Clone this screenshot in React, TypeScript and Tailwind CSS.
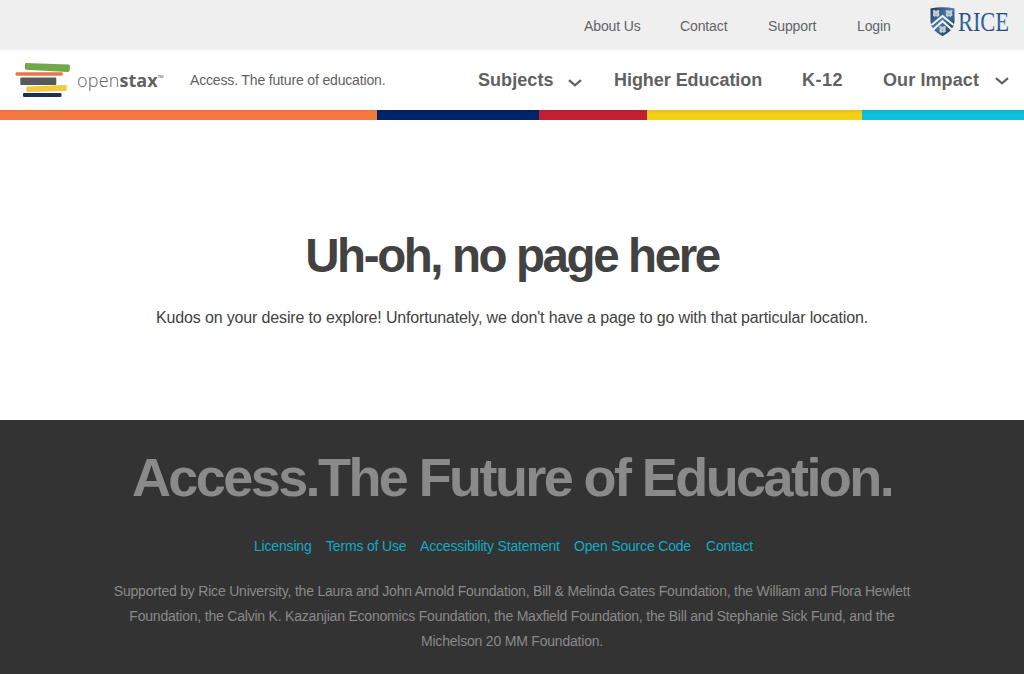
import React from "react";

function Chevron({ className }: { className: string }) {
  return (
    <svg viewBox="0 0 14 8" className={className} fill="none" stroke="currentColor" strokeWidth="2.3">
      <path d="M1 1.200 L7 6.300 L13 1.200" />
    </svg>
  );
}

function BooksLogo() {
  return (
    <svg viewBox="0 0 56 36" className="h-[36px] w-[56px] shrink-0">
      <path d="M11 1 L53.5 2.6 Q55 2.7 55 4 L54.6 8.6 Q54.5 10 53 9.9 L11 7.8 Q9.900 7.700 10 6.500 L10 2 Q10 1 11 1Z" fill="#72a84a" />
      <rect x="0.600" y="10.300" width="47" height="3.500" rx="1" fill="#ed7446" />
      <rect x="5.300" y="15.400" width="36" height="7.600" rx="1" fill="#585a58" />
      <path d="M12.500 24.600 L50.500 23.100 Q51.700 23.100 51.700 24.200 L51.900 27.600 Q51.900 28.900 50.700 29 L12.500 29.900 Q11.400 29.900 11.400 28.800 L11.300 25.700 Q11.300 24.600 12.500 24.600Z" fill="#f1cb40" />
      <rect x="8" y="30.900" width="38.500" height="4.100" rx="1" fill="#202d55" />
    </svg>
  );
}

function Owl({ x, y }: { x: number; y: number }) {
  return (
    <g transform={`translate(${x} ${y})`} fill="#c4cdd6">
      <path d="M0 .5 L2 0 L3.500 1 L5 0 L7 .5 L6.500 3 L7 5.500 L4.800 7 L3.500 6 L2 7 L.3 5.500 L.8 3Z" />
      <path d="M3 3.500h1v1.200h-1z" fill="#6f8299" />
    </g>
  );
}

function RiceLogo() {
  return (
    <svg viewBox="0 0 82 32" className="h-[32px] w-[82px] shrink-0 overflow-visible">
      <defs>
        <linearGradient id="shield" x1="0" y1="0" x2="1" y2="1">
          <stop offset="0" stopColor="#1c3554" />
          <stop offset="0.450" stopColor="#4a7cac" />
          <stop offset="1" stopColor="#162b49" />
        </linearGradient>
        <linearGradient id="rice" x1="0" y1="0" x2="0" y2="1">
          <stop offset="0" stopColor="#173766" />
          <stop offset="0.550" stopColor="#3c6ca8" />
          <stop offset="1" stopColor="#173766" />
        </linearGradient>
      </defs>
      <path d="M.5 1.500 Q12.500 -1 24.500 1.500 V15 Q24 23 12.500 29.300 Q1 23 .5 15Z" fill="url(#shield)" />
      <path d="M1.500 18 L12.500 9 L23.500 18 M3 22.700 L12.500 14.200 L22 22.700" stroke="#f4f6f8" strokeWidth="2" fill="none" />
      <Owl x={2.5} y={3} />
      <Owl x={15.5} y={3} />
      <Owl x={9} y={19} />
      <text x="28" y="23.600" textLength="51" lengthAdjust="spacingAndGlyphs" fontFamily="'Liberation Serif', serif" fontSize="27" fill="url(#rice)">RICE</text>
    </svg>
  );
}

export default function App() {
  return (
    <div className="flex h-[674px] w-[1024px] flex-col overflow-hidden bg-white font-['Liberation_Sans',Arial,sans-serif] whitespace-nowrap">
      <div className="flex h-[50px] shrink-0 justify-end bg-[#efefef] pr-[12px] text-[14px] leading-[52px] tracking-[-0.120px] text-[#626466]">
        <a className="w-[96px]">About Us</a>
        <a className="w-[88px]">Contact</a>
        <a className="w-[89px]">Support</a>
        <a className="w-[73px]">Login</a>
        <span className="pt-[7px]"><RiceLogo /></span>
      </div>

      <header className="flex h-[60px] shrink-0 items-center pl-[15px] leading-[60px] text-[#5f6163]">
        <BooksLogo />
        <div className="ml-[6px] flex w-[113px] font-['Open_Sans',sans-serif] text-[18px] leading-[58px]">
          <span className="font-light tracking-[0.200px]">open</span>
          <span className="font-bold">stax</span>
          <span className="text-[8px] leading-[54px]">™</span>
        </div>
        <span className="w-[288px] text-[14px] tracking-[-0.160px]">Access. The future of education.</span>
        <nav className="flex items-center text-[18px] leading-[62px] font-bold text-[#5f6163]">
          <a className="w-[90px] tracking-[0.060px]">Subjects</a>
          <Chevron className="mt-[6px] mr-[32px] h-[8px] w-[14px]" />
          <a className="w-[188px] tracking-[-0.050px]">Higher Education</a>
          <a className="w-[81px] tracking-[0.500px]">K-12</a>
          <a className="w-[112px] tracking-[0.100px]">Our Impact</a>
          <Chevron className="mt-[2px] h-[8px] w-[14px]" />
        </nav>
      </header>

      <div className="flex h-[10px] shrink-0">
        <div className="w-[377px] bg-linear-to-b from-[#ed7340] to-[#f47941] to-40%" />
        <div className="w-[162px] bg-linear-to-b from-[#002163] to-[#002469] to-40%" />
        <div className="w-[108px] bg-linear-to-b from-[#b81f2f] to-[#c22032] to-40%" />
        <div className="w-[215px] bg-linear-to-b from-[#e3c01d] to-[#f4d019] to-40%" />
        <div className="w-[162px] bg-linear-to-b from-[#10b3cf] to-[#0dc0dc] to-40%" />
      </div>

      <main className="flex h-[300px] shrink-0 flex-col items-center text-[#424242]">
        <h1 className="mt-[106px] text-[47.5px] leading-[60px] font-bold tracking-[-2.400px]">Uh-oh, no page here</h1>
        <p className="mt-[19px] text-[16px] leading-[25px] tracking-[-0.150px]">
          Kudos on your desire to explore! Unfortunately, we don't have a page to go with that particular location.
        </p>
      </main>

      <footer className="flex grow flex-col items-center bg-[#333333] text-[#8a8a8a]">
        <h2 className="mt-[27px] text-[54px] leading-[60px] font-bold tracking-[-2.580px]">Access.The Future of Education.</h2>
        <div className="mt-[27px] flex w-[516px] text-[14px] leading-[25px] tracking-[-0.180px] text-[#12abc4]">
          <a className="w-[72px]">Licensing</a>
          <a className="w-[94px]">Terms of Use</a>
          <a className="w-[154px]">Accessibility Statement</a>
          <a className="w-[132px]">Open Source Code</a>
          <a>Contact</a>
        </div>
        <p className="mt-[20px] text-center text-[14px] leading-[25px] tracking-[-0.205px]">
          Supported by Rice University, the Laura and John Arnold Foundation, Bill &amp; Melinda Gates Foundation, the William and Flora Hewlett
          <br />
          Foundation, the Calvin K. Kazanjian Economics Foundation, the Maxfield Foundation, the Bill and Stephanie Sick Fund, and the
          <br />
          Michelson 20 MM Foundation.
        </p>
      </footer>
    </div>
  );
}
